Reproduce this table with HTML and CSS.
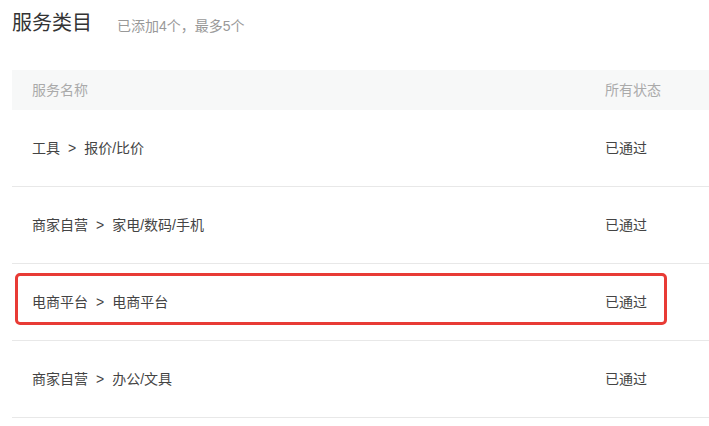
FILE: index.html
```html
<!DOCTYPE html>
<html lang="zh">
<head>
<meta charset="utf-8">
<link rel="stylesheet" href="styles.css">
</head>
<body>
<div class="page">
  <div class="title-bar">
    <h1 class="title">服务类目</h1>
    <span class="subtitle">已添加4个，最多5个</span>
  </div>
  <div class="table">
    <div class="thead">
      <div class="col-name">服务名称</div>
      <div class="col-status">所有状态</div>
    </div>
    <div class="row">
      <div class="col-name">工具<span class="sep">&gt;</span>报价/比价</div>
      <div class="col-status">已通过</div>
    </div>
    <div class="row">
      <div class="col-name">商家自营<span class="sep">&gt;</span>家电/数码/手机</div>
      <div class="col-status">已通过</div>
    </div>
    <div class="row highlighted">
      <div class="col-name">电商平台<span class="sep">&gt;</span>电商平台</div>
      <div class="col-status">已通过</div>
    </div>
    <div class="row">
      <div class="col-name">商家自营<span class="sep">&gt;</span>办公/文具</div>
      <div class="col-status">已通过</div>
    </div>
  </div>
</div>
</body>
</html>
```
FILE: styles.css
```css
*, *::before, *::after { box-sizing: border-box; }
html, body { margin: 0; padding: 0; background: #fff; }
body {
  font-family: "Liberation Sans", "Noto Sans CJK SC", sans-serif;
  color: #333;
}
.page { padding: 9px 0 0 12px; }
.title-bar { display: flex; align-items: center; height: 28px; }
.title { margin: 0; font-size: 20px; font-weight: normal; color: #333; line-height: 28px; }
.subtitle { margin-left: 25px; font-size: 14px; color: #999; padding-top: 3px; }
.table { margin-top: 33px; }
.thead {
  display: flex; align-items: center;
  height: 40px; background: #f7f8f8;
  font-size: 14px; color: #aaa;
  padding-bottom: 2px;
}
.row {
  position: relative;
  display: flex; align-items: center;
  height: 77px; border-bottom: 1px solid #e8e8e8;
  font-size: 14px; color: #444;
  padding-bottom: 2px;
}
.col-name { flex: 1; padding-left: 20px; }
.col-status { width: 104px; }
.sep { margin: 0 8px; }
.highlighted::after {
  content: "";
  position: absolute;
  left: 3px; top: 9px;
  width: 652px; height: 52px;
  border: 3px solid #e83b35;
  border-radius: 5px;
}
```
